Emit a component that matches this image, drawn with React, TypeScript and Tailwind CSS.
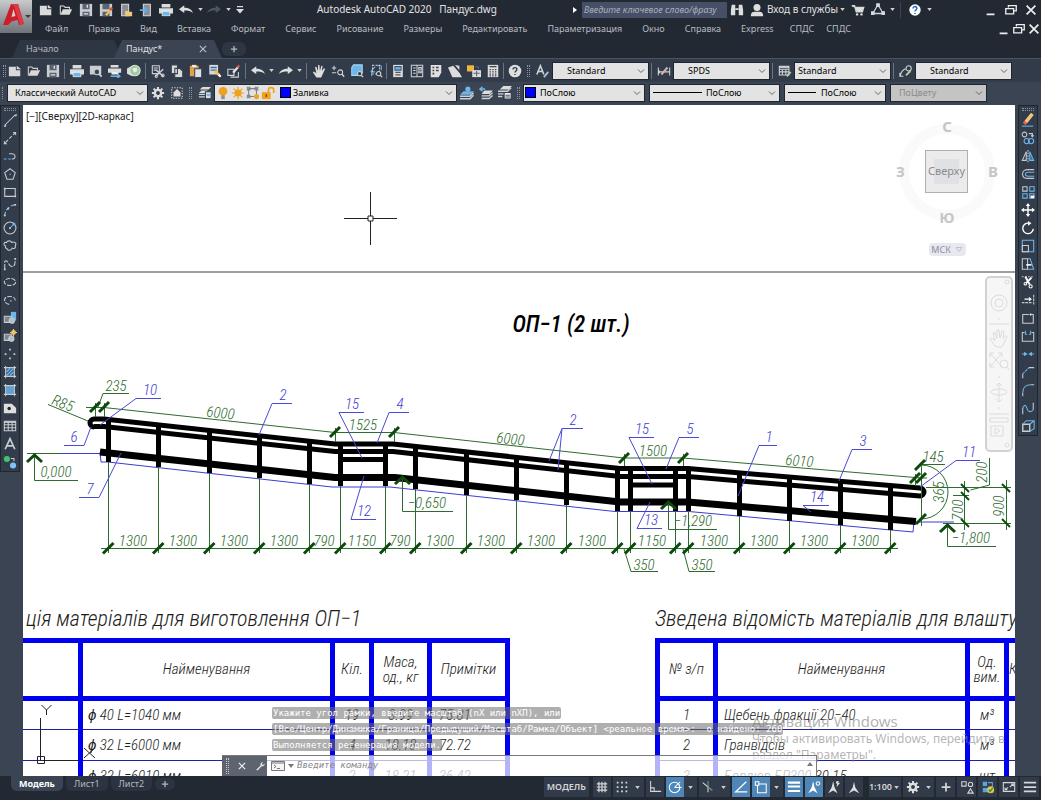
import { useState, type ReactNode } from "react";
import clsx from "clsx";

/* ---------- icons (16x16 grid) ---------- */

const ICONS: Record<string, ReactNode> = {
  new: <path d="M1 3h8v4h5v7H1z M10 2l5 4h-5z" fill="#d9d9d9" stroke="none" />,
  open: (
    <>
      <path d="M1.5 13V3.5h4l1.5 1.5h5V7" />
      <path d="M1.5 13.5l3-6.5h10.5l-3 6.5z" fill="#d9d9d9" stroke="none" />
    </>
  ),
  save: (
    <>
      <path d="M1 1h14v14H1z" fill="#c9ccd0" stroke="none" />
      <path d="M4 1h8v6H4z M4 10h8v5H4z" fill="#5a6370" stroke="none" />
      <path d="M5.5 12.500h5 M9.5 2v3.500" stroke="#e4e4e4" strokeWidth="1.500" />
    </>
  ),
  saveAs: (
    <>
      <path d="M1 1h14v14H1z" fill="#c9ccd0" stroke="none" />
      <path d="M4 1h8v6H4z M4 10h8v5H4z" fill="#5a6370" stroke="none" />
      <path d="M8 14l6-7" stroke="#f2c14e" strokeWidth="2.600" />
      <path d="M12.600 8.400L15 5.500" stroke="#d9523f" strokeWidth="2.600" />
    </>
  ),
  fromWeb: (
    <>
      <path d="M3 1.5h8v13H3z" fill="#8a8f96" stroke="#d9d9d9" />
      <path d="M7 15V9h3l1 1h4v5z" fill="#f0c777" stroke="none" />
    </>
  ),
  toWeb: (
    <>
      <path d="M5 1.5h8v13H5z" fill="#8a8f96" stroke="#d9d9d9" />
      <path d="M1 8h7 M5.5 5l3 3-3 3" stroke="#5fb0ea" strokeWidth="2" />
    </>
  ),
  print: (
    <>
      <path d="M0 6h16v6H0z M3 1h10v4H3z" fill="#dcdcdc" stroke="none" />
      <path d="M3.500 9.5h9v5h-9z" fill="#6cb6ea" stroke="#fff" strokeWidth="0.8" />
    </>
  ),
  preview: (
    <>
      <path d="M1 2h13v10H1z" fill="#c9ccd0" stroke="none" />
      <circle cx="9" cy="9" r="3.2" fill="#3b4453" />
      <path d="M11.5 11.5l3 3" strokeWidth="2" />
    </>
  ),
  publish: (
    <>
      <path d="M0 5h15v5H0z M3 1h9v3H3z" fill="#dcdcdc" stroke="none" />
      <path d="M4 9h8v3H4z" fill="#eee" stroke="none" />
      <path d="M3 14h10 M10.5 11.5L13.5 14l-3 2" stroke="#6cb6ea" strokeWidth="1.600" />
    </>
  ),
  globe: (
    <>
      <path d="M0 5l6-3v12l-6-3z" fill="#d9d9d9" stroke="none" />
      <circle cx="9" cy="7.5" r="6" fill="#9fc7a0" stroke="#dfe9df" />
      <path d="M6 5l5-1 1 4-4 2z" fill="#dff0df" stroke="none" />
    </>
  ),
  cut: (
    <>
      <path d="M1.5 2h8v9h-8z M3 4.500h5 M3 7h4" />
      <path d="M5 14l9-8 M6 7l8 7" strokeWidth="1.6" />
      <circle cx="13.5" cy="13" r="1.5" />
      <circle cx="6" cy="14" r="1.3" />
    </>
  ),
  copy: (
    <path d="M1.500 1h7v10h-7z M5.500 5h5.500l3.500 3v7.500h-9z" fill="#d9d9d9" stroke="#3b4453" />
  ),
  paste: (
    <>
      <path d="M1 2h10v12H1z" fill="#e0a24a" stroke="none" />
      <path d="M3.500 1h5v2.500h-5z" fill="#eee" stroke="none" />
      <path d="M6.500 5.500h8V15.500h-8z" fill="#dfe2e6" stroke="#3b4453" />
    </>
  ),
  match: (
    <>
      <path d="M1.500 1h10v11h-10z" fill="#d9d9d9" stroke="none" />
      <path d="M3 4h7 M3 7h7" stroke="#3c6fa8" strokeWidth="1.500" />
      <path d="M8 8l5 5" stroke="#f2c14e" strokeWidth="3" />
      <path d="M12 12l2.500 2.500" stroke="#fff" strokeWidth="2.500" />
    </>
  ),
  blockEdit: (
    <>
      <path d="M1 6h7v7H1z M4 15h9V9" />
      <path d="M7 10l6-7" stroke="#e3e3e3" strokeWidth="2.600" />
      <path d="M12 4l2-2.500" stroke="#d9523f" strokeWidth="2.600" />
    </>
  ),
  undo: (
    <path d="M0 7L6 2.500v2.800c5 0 8.500 1.500 10 6.200-2.500-2.500-5.500-3-10-3v3z" fill="#dedede" stroke="none" />
  ),
  redo: (
    <path d="M16 7L10 2.500v2.800c-5 0-8.500 1.500-10 6.200 2.500-2.500 5.500-3 10-3v3z" fill="#dedede" stroke="none" />
  ),
  redoOff: (
    <path d="M16 7L10 2.500v2.800c-5 0-8.500 1.500-10 6.200 2.500-2.500 5.500-3 10-3v3z" fill="#4c5460" stroke="none" />
  ),
  hand: (
    <path d="M5 15.500L1 9.500l1.200-1L5 10.500 3.500 3.500l1.500-.4 1.800 5L7 1h1.500l.5 7 1.700-6 1.400.4-.9 6 2.400-3.500 1.400.7-3 6.400-1.500 3.500z" fill="#dedede" stroke="none" />
  ),
  zoomRt: (
    <>
      <path d="M1 4.500h5 M3.500 2v5 M1 10h5" />
      <circle cx="10.500" cy="9.500" r="2.800" />
      <path d="M12.500 11.500l2.500 3" strokeWidth="1.600" />
    </>
  ),
  zoomWin: (
    <>
      <path d="M2 4l2-3h10v9l-2 3H2z" fill="#6cb6ea" stroke="#a8d5f5" />
      <circle cx="11" cy="11" r="2.500" fill="#323b49" />
      <path d="M13 13l2 2" strokeWidth="1.600" />
    </>
  ),
  zoomPrev: (
    <>
      <path d="M2 9l5-6 M7 9H3v5 M14 2v5 M9 2h5" stroke="#6cb6ea" />
      <path d="M4 1.500h8v10H4z" strokeDasharray="2 1.500" />
      <circle cx="11" cy="11" r="2.500" fill="#323b49" />
      <path d="M13 13l2 2" strokeWidth="1.600" />
    </>
  ),
  props: (
    <>
      <path d="M2.500 1h11v14h-11z" fill="#dcdcdc" stroke="none" />
      <path d="M4.500 3h7v4h-7z" fill="#6cb6ea" stroke="#3c5a78" />
      <path d="M5 9.500h6 M5 12.500h6" stroke="#555" strokeWidth="1.500" />
    </>
  ),
  center: (
    <>
      <path d="M1.500 1.500h13v13h-13z M8 1.500v13" />
      <path d="M3.500 4.500h3 M3.500 7.500h3 M10 4h3v2h-3z M10 8h3v2h-3z M3.500 10.500h3" />
    </>
  ),
  palettes: (
    <>
      <path d="M2 1h12v9l-3 5H2z" fill="#e0e0e0" stroke="none" />
      <path d="M4 4h2 M8 4h3 M4 7.500h2 M8 7.500h3 M4 11h2" stroke="#444" strokeWidth="1.800" />
    </>
  ),
  sheetSet: (
    <path d="M0 4l6-2 7 8 3 5H5z M8 1l5 1v5z" fill="#dcdcdc" stroke="none" />
  ),
  markup: (
    <>
      <path d="M0 1.500h8v7H0z" fill="#f0b73c" stroke="none" />
      <path d="M6 7h10v8H6z" fill="#dcdcdc" stroke="none" />
      <path d="M7.500 10.500h7 M11 8v6 M9 3.500h4V6" stroke="#50657c" />
    </>
  ),
  calc: (
    <>
      <path d="M2 1h12v14H2z" fill="#dcdcdc" stroke="none" />
      <path d="M4 3h8" stroke="#444" strokeWidth="1.500" />
      <path d="M4 6.500h8 M4 9h8 M4 11.500h8 M4 13.500h8" stroke="#444" strokeDasharray="1.600 1.500" strokeWidth="1.400" />
    </>
  ),
  help: (
    <>
      <circle cx="8" cy="8" r="7.200" fill="#dedede" stroke="none" />
      <path d="M5.800 6.300c0-3 4.500-2.800 4.300 0C10 8 8 8 8 9.800 M8 11.300v1.400" stroke="#323b49" strokeWidth="1.600" />
    </>
  ),
  helpBlue: (
    <>
      <circle cx="8" cy="8" r="6.500" fill="#fff" stroke="none" />
      <path d="M5.800 6.300c0-3 4.500-2.800 4.300 0C10 8 8 8 8 9.800 M8 11.300v1.400" stroke="#1e66c8" strokeWidth="1.700" />
    </>
  ),
  textStyle: (
    <>
      <path d="M1 12L5 2l4 10 M2.500 8.500h5" strokeWidth="1.800" />
      <path d="M9 15l5-6" stroke="#a9bdd0" strokeWidth="2.200" />
    </>
  ),
  dimStyle: (
    <>
      <path d="M1.500 4v9 M14.500 4v9 M1.500 9h13 M3 7.500L1.500 9 3 10.500" />
      <path d="M5 12l7-8" strokeWidth="2.200" stroke="#d7b3a4" />
    </>
  ),
  tableStyle: (
    <>
      <path d="M1.500 2.500h11v10h-11z M1.500 6h11 M1.500 9h11 M5 6v6.500 M9 6v6.500" />
      <path d="M1.500 3.500h11" strokeWidth="2" />
      <path d="M10 14l4.500-5" stroke="#b8c9a8" strokeWidth="2.200" />
    </>
  ),
  leaderStyle: (
    <>
      <path d="M1.500 13.500c1-5 3-7 6-8 M1 10v4h4" />
      <circle cx="11" cy="5" r="3" />
      <path d="M8 13l5-5" stroke="#bcc6a0" strokeWidth="2.200" />
    </>
  ),
  gear: (
    <>
      <circle cx="8" cy="8" r="5" fill="#dedede" stroke="none" />
      <path d="M8 1v14 M1 8h14 M3 3l10 10 M13 3L3 13" strokeWidth="2.400" stroke="#dedede" />
      <circle cx="8" cy="8" r="2.200" fill="#323b49" stroke="none" />
    </>
  ),
  frame: (
    <>
      <path d="M2 2h12v12H2z" strokeDasharray="1.500 1.500" />
      <path d="M4 7.500L8 3.500l4 4V12H4z" fill="#dedede" stroke="none" />
    </>
  ),
  layers: (
    <>
      <path d="M5 1h10l-3 3H2z M4 5h7l-2 3H1z" fill="#dcdcdc" stroke="none" />
      <path d="M1 9.500h7 M1 12.500h7" strokeWidth="1.500" />
      <path d="M8.500 6.500h6.500v8h-6.500z" fill="#dcdcdc" stroke="#323b49" />
      <path d="M10 9h3.500v2.500H10z" fill="#6cb6ea" stroke="none" />
    </>
  ),
  bulb: (
    <>
      <circle cx="8" cy="6" r="5" fill="#f0a21c" stroke="none" />
      <path d="M6 10.500h4V15H6z" fill="#8c8f94" stroke="none" />
    </>
  ),
  sun: (
    <>
      <circle cx="8" cy="8" r="4" fill="#f0a21c" stroke="none" />
      <path d="M8 1v14 M1 8h14 M3 3l10 10 M13 3L3 13" stroke="#f0a21c" strokeWidth="1.400" />
    </>
  ),
  vpFreeze: (
    <>
      <path d="M3 3h9v9H3z M1.500 1.500h3v3h-3z M10.500 1.500h3v3h-3z M1.500 10.500h3v3h-3z" stroke="#7c8188" />
      <circle cx="12" cy="12" r="3" fill="#f0a21c" stroke="none" />
    </>
  ),
  unlock: (
    <>
      <path d="M1 7h10v8H1z" fill="#f0a21c" stroke="none" />
      <path d="M8.500 7V4.500C8.500 1 14.500 1 14.500 4.500V8" stroke="#f0a21c" strokeWidth="2" />
      <path d="M6 9.500v3" stroke="#7a4b00" strokeWidth="1.500" />
    </>
  ),
  layCur: (
    <>
      <circle cx="9" cy="3.500" r="3" fill="#6cb6ea" stroke="none" />
      <path d="M4 6h12l-4 4H0z" fill="#6cb6ea" stroke="none" />
      <path d="M0 11.700h11.500l4-4 M0 14.500h11.500l4-4" strokeWidth="1.600" />
    </>
  ),
  layPrev: (
    <>
      <path d="M1 3.500h6 M4 1L1 3.500 4 6" stroke="#6cb6ea" strokeWidth="1.600" />
      <path d="M6 5h10l-4 4H3z" fill="#dcdcdc" stroke="none" />
      <path d="M3 11.300h8.500l4-3.500 M3 14.300h8.500l4-3.500" strokeWidth="1.600" />
    </>
  ),
  layState: (
    <>
      <path d="M6 0h10l-4 4H2z" fill="#dcdcdc" stroke="none" />
      <path d="M0 6h11l4-4 M0 9h7" strokeWidth="1.600" />
      <path d="M7 7.500h8V15H7z" fill="#eee" stroke="#323b49" />
      <path d="M8.500 10.500h5 M8.500 12.500h5" stroke="#555" />
      <path d="M0 12h5" strokeWidth="1.600" />
    </>
  ),

  line: <path d="M2 14L14 2 M1 15h2v-2 M13 3h2V1" />,
  xline: (
    <>
      <path d="M3 13L13 3" strokeDasharray="4 2" />
      <path d="M1 15v-4l4 4z M15 1v4l-4-4z" fill="currentColor" stroke="none" />
    </>
  ),
  pline: (
    <>
      <path d="M1 11.500h9" strokeDasharray="3 2" stroke="#6cb6ea" />
      <path d="M10 11.500c5 0 5-6 0-6H7" />
    </>
  ),
  polygon: (
    <>
      <path d="M8 2l6 4.500L11.500 14h-7L2 6.500z" />
      <path d="M7.500 8.500h1.500" stroke="#6cb6ea" strokeWidth="1.500" />
    </>
  ),
  rect: (
    <>
      <path d="M2 4h12v9H2z" />
      <path d="M1 3h2v2H1z M13 12h2v2h-2z" fill="currentColor" stroke="none" />
    </>
  ),
  arc: (
    <>
      <path d="M2 15C2 8 7 3 14 2" strokeDasharray="5 2" stroke="#8fc4ec" />
      <path d="M1 13h2v2H1z M13 1h2v2h-2z M5 5.500h2v2H5z" fill="currentColor" stroke="none" />
    </>
  ),
  circle: (
    <>
      <circle cx="8" cy="8" r="6.800" />
      <path d="M8 8l4-4" stroke="#6cb6ea" />
      <path d="M7 7h2v2H7z" fill="currentColor" stroke="none" />
      <path d="M11 2h3v3h-3z" fill="#6cb6ea" stroke="none" />
    </>
  ),
  cloud: (
    <path d="M3 8C0 7 1 3 4 4c1-2.500 5-2.500 6 0 3-1.500 6 1 4 3.500 1 3-2 4-3.500 3-1 3-5 3-5.500 1-2-.5-2.500-2-2-3.500z" />
  ),
  spline: (
    <>
      <path d="M2 14V5c4-3 4 6 8 6 4 0 4-5 4-9" strokeDasharray="6 1.500" />
      <path d="M1 13h2v2H1z M13 1h2v2h-2z" fill="currentColor" stroke="none" />
    </>
  ),
  ellipse: <ellipse cx="8" cy="8" rx="6.500" ry="4" strokeDasharray="5 1.500" />,
  ellArc: (
    <>
      <path d="M7 13C0 12 0 4 7 4s7 3 7 5" strokeDasharray="5 1.500" />
      <path d="M8 9h2" stroke="#6cb6ea" />
    </>
  ),
  insert: (
    <>
      <path d="M9 1h6v10H9z" fill="#6cb6ea" stroke="none" />
      <path d="M1.500 6h8v7h-8z" fill="#7b8491" />
      <circle cx="10" cy="11" r="3" fill="#b7bdc6" />
    </>
  ),
  makeBlock: (
    <>
      <path d="M1.500 6h8v7h-8z" fill="#7b8491" />
      <circle cx="9.500" cy="11" r="3" fill="#b7bdc6" />
      <circle cx="12" cy="4" r="2.800" fill="#f5c56a" stroke="none" />
      <path d="M12 0v8 M8 4h8" stroke="#f5c56a" />
    </>
  ),
  points: (
    <path d="M7 2h2v2H7z M2 7h2v2H2z M12 7h2v2h-2z M7 12h2v2H7z" fill="currentColor" stroke="none" />
  ),
  hatch: (
    <>
      <path d="M3.500 3.500h9v9h-9z" fill="#3c6f9c" stroke="none" />
      <path d="M4 8l4-4 M4 12l8-8 M8 12l4-4" stroke="#8fc4ec" />
      <path d="M3 1v14 M13 1v14 M1 3h14 M1 13h14" />
    </>
  ),
  gradient: (
    <>
      <path d="M3.500 3.500h9v9h-9z" fill="#5ea3d8" stroke="none" />
      <path d="M3 1v14 M13 1v14 M1 3h14 M1 13h14" />
    </>
  ),
  region: (
    <>
      <path d="M1 3h9l5 5v6H1z" fill="#dedede" stroke="none" />
      <circle cx="7" cy="8.500" r="2" fill="#20262f" stroke="none" />
    </>
  ),
  table: (
    <>
      <path d="M1.500 2.500h13v11h-13z M1.500 6.500h13 M1.500 10h13 M6 4v9.500 M10.500 4v9.500" />
      <path d="M1.500 3.500h13" strokeWidth="2" />
    </>
  ),
  mtext: <path d="M2.500 14L8 2l5.500 12 M4.500 10h7" strokeWidth="2" />,
  addSel: (
    <>
      <circle cx="4.500" cy="4.500" r="3.500" fill="#3fc46c" stroke="none" />
      <circle cx="11.500" cy="12" r="3.500" fill="#7cc4f4" stroke="none" />
      <path d="M9 4h3.500v3" />
    </>
  ),

  erase: (
    <>
      <path d="M5 11l8-10" stroke="#f2c777" strokeWidth="4" />
      <path d="M3.500 12.500L5.500 10" stroke="#e2655a" strokeWidth="4" />
      <path d="M1 15h13" stroke="#6cb6ea" />
    </>
  ),
  copyObj: (
    <>
      <circle cx="4" cy="4" r="2.700" />
      <path d="M9 3h4v3 M11.500 5L13 6.500 14.500 5" />
      <circle cx="6.500" cy="11.500" r="3" stroke="#6cb6ea" />
      <circle cx="11.500" cy="11.500" r="3" stroke="#6cb6ea" />
    </>
  ),
  mirror: (
    <>
      <path d="M6 3v10H1.500z" />
      <path d="M10 3v10h4.500z" stroke="#6cb6ea" fill="#2f6d9c" />
      <path d="M8 1v14" strokeDasharray="2 1" />
    </>
  ),
  offset: (
    <>
      <path d="M15 3H7C0 3 0 13 7 13h8" />
      <path d="M15 6H8C4 6 4 10.500 8 10.500h7" stroke="#6cb6ea" />
    </>
  ),
  array: (
    <>
      <path d="M2 2h5v5H2z" />
      <path d="M10 2h5v5h-5z M2 10h5v5H2z M10 10h5v5h-5z" stroke="#6cb6ea" />
      <path d="M11 12h4v3h-4z" fill="#fff" stroke="none" />
    </>
  ),
  move: (
    <>
      <path d="M8 3v10 M3 8h10" strokeWidth="1.600" stroke="#fff" />
      <path d="M8 0l2.500 3.500h-5z M8 16l2.500-3.500h-5z M0 8l3.500-2.500v5z M16 8l-3.500-2.500v5z" fill="#fff" stroke="none" />
    </>
  ),
  rotate: (
    <>
      <path d="M14 9a6 6 0 1 1-5-6.500" stroke="#fff" strokeWidth="1.600" />
      <path d="M8 0l4 2.700L8 5.500z" fill="#fff" stroke="none" />
    </>
  ),
  scale: (
    <>
      <path d="M1.500 1.500h13v13h-13z" stroke="#6cb6ea" />
      <path d="M1.500 7.500h7v7h-7z" />
    </>
  ),
  stretch: (
    <>
      <path d="M1.500 2h6v12h-6z" />
      <path d="M7.500 2h3l4 12h-7" stroke="#6cb6ea" />
      <path d="M6 9h6" stroke="#fff" strokeWidth="1.800" />
    </>
  ),
  trim: (
    <>
      <path d="M1 2h14" strokeDasharray="2 1.500" />
      <path d="M5 2l5 9 M12 3L6 9" stroke="#fff" strokeWidth="2.200" />
      <circle cx="11" cy="13" r="1.800" stroke="#fff" />
      <circle cx="5" cy="10" r="1.500" stroke="#fff" />
    </>
  ),
  extend: (
    <>
      <path d="M1 11h12 M14.500 2v12" strokeDasharray="3 1" />
      <path d="M4 7h7 M9 5l2.500 2L9 9" stroke="#fff" />
    </>
  ),
  breakPt: (
    <>
      <path d="M9 4h-7v10h12V4h-2" />
      <path d="M10 3h2v2h-2z" fill="#fff" stroke="none" />
    </>
  ),
  break2: (
    <>
      <path d="M4 4H1.500v10h13V4H12" />
      <path d="M5 2v4h2 M11 2v4H9" stroke="#6cb6ea" />
    </>
  ),
  join: (
    <path d="M1 8h5 M4 6.500L6.500 8 4 9.500z M15 8h-5 M12 6.500L9.500 8l2.500 1.500z" stroke="#6cb6ea" fill="#6cb6ea" />
  ),
  chamfer: (
    <>
      <path d="M2 15V10 M9 3h6" />
      <path d="M2 10l7-7" stroke="#6cb6ea" strokeDasharray="3 1" />
    </>
  ),
  fillet: (
    <>
      <path d="M2 15v-4 M11 2h4" />
      <path d="M2 11c0-6 4-9 9-9" stroke="#6cb6ea" />
    </>
  ),
  blend: (
    <>
      <path d="M2 15V8 M14 2v8" />
      <path d="M2 8C4 3 6 5 7 9s5 4 7 1" stroke="#6cb6ea" />
    </>
  ),
  explode: (
    <>
      <path d="M2 6h8v8H2z" strokeWidth="1.600" />
      <path d="M2 6l4-4h9v9l-5 3 M10 6l5-4" stroke="#6cb6ea" />
    </>
  ),

  binoc: (
    <>
      <path d="M2 2h4v12H1V8z M10 2h4l1 6v6h-5z" fill="#dedede" stroke="none" />
      <path d="M6 7h4" strokeWidth="2" />
    </>
  ),
  user: (
    <>
      <circle cx="8" cy="5" r="4" fill="#dedede" stroke="none" />
      <path d="M1 15c0-6 4-5 7-5s7-1 7 5z" fill="#dedede" stroke="none" />
    </>
  ),
  cart: (
    <>
      <path d="M1 3h3l2 7h7l1.500-5H5z" fill="none" strokeWidth="1.600" />
      <path d="M5 5h9l-1 4H6z" fill="#dedede" stroke="none" />
      <circle cx="7" cy="13" r="1.400" fill="#dedede" stroke="none" />
      <circle cx="12" cy="13" r="1.400" fill="#dedede" stroke="none" />
    </>
  ),
  a360: (
    <>
      <path d="M8 2l6 10H2z" strokeWidth="1.500" stroke="#b9d4ea" />
      <path d="M2 12h12 M6.500 1h3v3h-3z M0.500 10h3v3h-3z M12.500 10h3v3h-3z" fill="#dedede" />
    </>
  ),
  min: <path d="M3 13h9" strokeWidth="2" stroke="#eee" />,
  restore: (
    <path d="M5 5V3h9v6h-3 M2 6.500h9v6H2z" stroke="#eee" strokeWidth="1.500" />
  ),
  close: <path d="M3 3l10 10 M13 3L3 13" stroke="#eee" strokeWidth="2" />,
  plus: <path d="M8 3v10 M3 8h10" strokeWidth="2" />,
  wrench: (
    <path d="M2 14l7-7c-1-3 1-5.500 4-5L11 4.500l.5 1.500 1.500.5L15 4c1 3-2 5-4.500 4.500L4 15z" fill="#eee" stroke="none" />
  ),

  grid: <path d="M4.500 2v12 M8 2v12 M11.500 2v12 M2 4.500h12 M2 8h12 M2 11.500h12" strokeWidth="1.400" />,
  snap: <path d="M2 3h13 M2 8h13 M2 13h13" strokeDasharray="2 3" strokeWidth="2" />,
  ortho: <path d="M3 1v12h12 M3 9h4v4" />,
  polar: (
    <>
      <circle cx="7.500" cy="8.500" r="6" stroke="#fff" />
      <path d="M7.500 8.500h8 M7.500 8.500L14 2" stroke="#fff" />
    </>
  ),
  iso: (
    <>
      <path d="M2 3l6 5v6" />
      <path d="M8 1v7l5 4" stroke="#6fa77c" />
    </>
  ),
  otrack: <path d="M14 2L2 13.500h13" stroke="#fff" strokeWidth="1.500" />,
  osnap: (
    <>
      <path d="M4 4.500h10v10H4z" stroke="#fff" />
      <path d="M1.500 2h4v4h-4z" fill="#4f86b8" stroke="#fff" />
    </>
  ),
  lwt: <path d="M1 3h14 M1 7.500h14 M1 12.500h14" stroke="#fff" strokeWidth="2.400" />,
  annoVis: (
    <>
      <path d="M7 1l-1.500 7L1.500 15l5.500-3 5 3-3.500-7z" fill="#fff" stroke="none" />
      <circle cx="12.500" cy="4" r="2" stroke="#fff" />
    </>
  ),
  annoAuto: (
    <path d="M7 1l-1.500 7L1.500 15l5.500-3 5 3-3.500-7z M11 1h2.500l-1 2H15l-4 5 .5-4H10z" fill="#dedede" stroke="none" />
  ),
  anno: <path d="M8 2L6.500 8.500 2 15 8 12l6 3-4.500-6.500z" fill="#dedede" stroke="none" />,
  isolate: (
    <>
      <path d="M2 2h5v5H2z M9 15l3-5 3 5z" />
      <circle cx="12" cy="5" r="2.500" />
    </>
  ),
  perf: (
    <>
      <path d="M2 2h5v5H2z" fill="#5aa4dc" stroke="none" />
      <path d="M8 3h5v5" stroke="#5aa4dc" />
      <path d="M2 9h6v5H2z" fill="#5aa4dc" stroke="none" />
      <circle cx="11" cy="11" r="4" fill="#e5c54a" stroke="none" />
      <path d="M9 11l1.500 2 3-4" stroke="#2f8f4a" strokeWidth="1.600" />
    </>
  ),
  clean: (
    <>
      <path d="M1.500 3h13v10h-13z" />
      <path d="M9 8l4-3.500 M10.500 4.500H13V7 M7 8.500L4 11 M3.500 8.500V11H6" />
    </>
  ),
  menu: <path d="M1 3h14 M1 8h14 M1 13h14" strokeWidth="2" />,
};

function Icon({ name, size = "md" }: { name: string; size?: "sm" | "md" }) {
  return (
    <svg
      viewBox="0 0 16 16"
      fill="none"
      stroke="currentColor"
      strokeWidth="1.2"
      className={clsx("shrink-0", size === "sm" ? "size-[10px]" : "size-[14px]")}
    >
      {ICONS[name]}
    </svg>
  );
}

function IconButton({
  name,
  label,
  className = "h-[18px] w-[19px]",
}: {
  name: string;
  label?: string;
  className?: string;
}) {
  return (
    <button
      type="button"
      aria-label={label ?? name}
      className={clsx("flex shrink-0 items-center justify-center", className)}
    >
      <Icon name={name} />
    </button>
  );
}

function Caret({ className = "w-[13px]" }: { className?: string }) {
  return (
    <span className={clsx("flex shrink-0 justify-center", className)}>
      <svg viewBox="0 0 6 4" className="h-[3px] w-[5px] fill-[#d0d0d0]">
        <path d="M0 0h6L3 4z" />
      </svg>
    </span>
  );
}

function Grip() {
  return (
    <span className="mx-[3px] h-3 w-[3px] shrink-0 border-x border-dotted border-[#8b94a1]" />
  );
}

function Sep({ tight }: { tight?: boolean }) {
  return (
    <span className={clsx("h-4 w-px shrink-0 bg-[#6a7380]", tight ? "mx-px" : "mx-[2px]")} />
  );
}

function Combo({
  label,
  value,
  width,
  pad = "pl-2",
  disabled,
  children,
}: {
  label: string;
  value: string;
  width: string;
  pad?: string;
  disabled?: boolean;
  children?: ReactNode;
}) {
  return (
    <div className={clsx("relative h-[18px] shrink-0", width)}>
      <select
        aria-label={label}
        disabled={disabled}
        className={clsx(
          "block h-full w-full appearance-none border border-[#20262f] text-[9px] leading-4 opacity-100 outline-none",
          pad,
          disabled ? "bg-[#c4c4c4] text-[#8a8a8a]" : "bg-[#e3e3e3] text-black",
        )}
      >
        <option>{value}</option>
      </select>
      {children}
      <svg
        viewBox="0 0 8 5"
        className="pointer-events-none absolute right-1 top-[7px] h-[5px] w-2 fill-none stroke-[#666]"
      >
        <path d="M1 .5l3 3 3-3" />
      </svg>
    </div>
  );
}

/* ---------- window chrome ---------- */

const MENU = [
  "Файл", "Правка", "Вид", "Вставка", "Формат", "Сервис", "Рисование",
  "Размеры", "Редактировать", "Параметризация", "Окно", "Справка", "Express",
];

function TitleBar() {
  const [query, setQuery] = useState("");
  return (
    <header className="flex h-[38px] shrink-0 bg-[#222933] text-[#d6d6d6]">
      <button
        type="button"
        aria-label="AutoCAD"
        className="flex h-[33px] w-8 shrink-0 items-center bg-linear-to-b from-[#c9cacc] to-[#6f7277]"
      >
        <svg viewBox="0 0 32 32" className="h-8 w-8">
          <path d="M3 24L11 3h7l6 20-5 1-1.500-5-6 1.500L8 24z" fill="#c8202b" />
          <path d="M11.500 16l4-1-2-7z" fill="#e8c9c9" />
          <path d="M11 3h7l6 20-4 .6L14 5z" fill="#dc3a42" />
          <path d="M25 14h6l-3 3z" fill="#3a3a3a" />
        </svg>
      </button>

      <div className="flex min-w-0 flex-1 flex-col">
        <div className="flex h-[19px] items-center">
          <div className="ml-1 flex items-center">
            {["new", "open", "save", "saveAs", "fromWeb", "toWeb", "print", "undo"].map((n) => (
              <IconButton key={n} name={n} className="h-[18px] w-5" />
            ))}
            <Caret className="w-2" />
            <IconButton name="redoOff" className="h-[18px] w-5" />
            <Caret className="w-2" />
            <svg viewBox="0 0 8 8" className="ml-1 size-2 fill-[#dedede]">
              <path d="M1 0h6v1.200H1z M0 3h8L4 7.500z" />
            </svg>
          </div>
          <h1 className="ml-auto whitespace-pre text-[10px] text-[#e2e2e2]">
            Autodesk AutoCAD 2020   Пандус.dwg
          </h1>
          <span className="ml-[76px] flex items-center">
            <svg viewBox="0 0 4 6" className="mr-[5px] h-[6px] w-1 fill-white">
              <path d="M0 0l4 3-4 3z" />
            </svg>
            <input
              value={query}
              onChange={(e) => setQuery(e.target.value)}
              aria-label="Поиск"
              placeholder="Введите ключевое слово/фразу"
              className="h-4 w-[145px] bg-[#464f66] px-[2px] text-[9px] italic text-white outline-none placeholder:text-[#a9b0bf]"
            />
          </span>
          <IconButton name="binoc" className="h-[18px] w-5" />
          <IconButton name="user" className="h-[18px] w-5" />
          <button type="button" className="flex items-center text-[10px] text-[#e2e2e2]">
            Вход в службы
            <Caret className="w-2" />
          </button>
          <IconButton name="cart" className="ml-[2px] h-[18px] w-5" />
          <IconButton name="a360" className="h-[18px] w-5" />
          <Caret className="w-2" />
          <span className="mx-1 h-4 w-px bg-[#3b4453]" />
          <IconButton name="helpBlue" className="h-[18px] w-5" />
          <Caret className="w-2" />
          <div className="ml-12 flex">
            <IconButton name="min" className="h-[18px] w-5" />
            <IconButton name="restore" className="h-[18px] w-5" />
            <IconButton name="close" className="h-[18px] w-5" />
          </div>
        </div>

        <nav className="flex h-[19px] items-center gap-5 pl-[13px] text-[9px] text-[#b9bcc1]">
          {MENU.map((m) => (
            <button key={m} type="button" className="shrink-0">
              {m}
            </button>
          ))}
          <span className="-ml-1 flex gap-3">
            <button type="button">СПДС</button>
            <button type="button">СПДС</button>
          </span>
          <div className="ml-auto flex">
            <IconButton name="min" className="h-[18px] w-[15px]" />
            <IconButton name="restore" className="h-[18px] w-[15px]" />
            <IconButton name="close" className="h-[18px] w-[15px]" />
          </div>
        </nav>
      </div>
    </header>
  );
}

function FileTabs() {
  return (
    <div className="flex h-5 shrink-0 items-end bg-[#222933] pl-3 text-[9px]">
      <button
        type="button"
        className="h-[18px] w-[110px] bg-[#2e3643] pl-[14px] text-left text-[#b4b8be] [clip-path:polygon(8px_0,102px_0,100%_100%,0_100%)]"
      >
        Начало
      </button>
      <div className="-ml-2 flex h-[18px] w-[108px] items-center bg-[#3b4453] pl-3 pr-[14px] text-[#e0e0e0] [clip-path:polygon(8px_0,100px_0,100%_100%,0_100%)]">
        <button type="button">Пандус*</button>
        <button type="button" aria-label="Закрыть" className="ml-auto opacity-70">
          <Icon name="close" size="sm" />
        </button>
      </div>
      <button
        type="button"
        aria-label="Новая вкладка"
        className="mb-[2px] flex h-[14px] w-6 items-center justify-center rounded-md bg-[#2e3643] text-[#b4b8be]"
      >
        <Icon name="plus" size="sm" />
      </button>
    </div>
  );
}

const STD_GROUPS = [
  ["new", "open", "save"],
  ["print", "preview", "publish", "globe"],
  ["cut", "copy", "paste", "match", "blockEdit"],
];

function Toolbars() {
  return (
    <div className="shrink-0 bg-[#3b4453] text-[#d0d3d7]">
      <div className="flex h-6 items-center border-t border-[#4a5361] bg-[#323b49]">
        <Grip />
        <span className="-ml-1" />
        {STD_GROUPS.map((g) => (
          <span key={g[0]} className="flex items-center">
            {g.map((n) => (
              <IconButton key={n} name={n} />
            ))}
            <Sep />
          </span>
        ))}
        <IconButton name="undo" />
        <Caret className="w-[9px]" />
        <IconButton name="redo" />
        <Caret className="w-[9px]" />
        <Sep />
        {["hand", "zoomRt", "zoomWin", "zoomPrev"].map((n) => (
          <IconButton key={n} name={n} />
        ))}
        <Sep tight />
        {["props", "center", "palettes", "sheetSet", "markup", "calc"].map((n) => (
          <IconButton key={n} name={n} />
        ))}
        <Sep tight />
        <IconButton name="help" />
        <Grip />
        <IconButton name="textStyle" />
        <Combo label="Текстовый стиль" value="Standard" width="w-[97px]" pad="pl-[14px]" />
        <Sep />
        <IconButton name="dimStyle" />
        <Combo label="Размерный стиль" value="SPDS" width="w-[97px]" pad="pl-[14px]" />
        <Sep />
        <IconButton name="tableStyle" />
        <Combo label="Стиль таблиц" value="Standard" width="w-[97px]" pad="pl-[3px]" />
        <Sep />
        <IconButton name="leaderStyle" />
        <Combo label="Стиль мультивыноски" value="Standard" width="w-[97px]" pad="pl-[14px]" />
      </div>

      <div className="flex h-[23px] items-center pb-[2px]">
        <span className="ml-[2px] mr-[3px] h-3 w-[2px] border-l border-dotted border-[#8b94a1]" />
        <Combo label="Рабочее пространство" value="Классический AutoCAD" width="w-[141px]" pad="pl-[7px]" />
        <IconButton name="gear" />
        <IconButton name="frame" />
        <Grip />
        <IconButton name="layers" />
        <Combo label="Слой" value="Заливка" width="w-[243px]" pad="pl-[78px]">
          <span className="pointer-events-none absolute left-[2px] top-[2px] flex items-center gap-px">
            <Icon name="bulb" />
            <Icon name="sun" />
            <Icon name="vpFreeze" />
            <Icon name="unlock" />
            <span className="ml-1 size-[11px] border border-black bg-[#0000ff]" />
          </span>
        </Combo>
        <IconButton name="layCur" />
        <IconButton name="layPrev" />
        <IconButton name="layState" />
        <Grip />
        <Combo label="Цвет" value="ПоСлою" width="w-[122px]" pad="pl-4">
          <span className="pointer-events-none absolute left-[2px] top-[3px] size-[11px] border border-black bg-[#0000ff]" />
        </Combo>
        <span className="w-1" />
        <Combo label="Тип линий" value="ПоСлою" width="w-[131px]" pad="pl-[56px]">
          <span className="pointer-events-none absolute left-1 top-2 h-px w-[49px] bg-black" />
        </Combo>
        <span className="w-1" />
        <Combo label="Вес линий" value="ПоСлою" width="w-[102px]" pad="pl-[36px]">
          <span className="pointer-events-none absolute left-1 top-2 h-px w-7 bg-black" />
        </Combo>
        <span className="w-1" />
        <Combo label="Стиль печати" value="ПоЦвету" width="w-[97px]" pad="pl-2" disabled />
      </div>
    </div>
  );
}

const DRAW_TOOLS = [
  "line", "xline", "pline", "polygon", "rect", "arc", "circle", "cloud", "spline", "ellipse",
  "ellArc", "insert", "makeBlock", "points", "hatch", "gradient", "region", "table", "mtext", "addSel",
];

const MODIFY_TOOLS = [
  "erase", "copyObj", "mirror", "offset", "array", "move", "rotate", "scale", "stretch",
  "trim", "extend", "breakPt", "break2", "join", "chamfer", "fillet", "blend", "explode",
];

function SideToolbar({ tools, label }: { tools: string[]; label: string }) {
  return (
    <div
      role="toolbar"
      aria-label={label}
      className="flex w-5 shrink-0 flex-col items-center self-start border border-[#20262f] bg-[#333c4a] text-[#c8ccd2]"
    >
      <span className="mt-[2px] h-[3px] w-3 border-y border-dotted border-[#8b94a1]" />
      {tools.map((t) => (
        <IconButton key={t} name={t} className="h-[18px] w-[18px]" />
      ))}
    </div>
  );
}

/* ---------- drawing ---------- */

type Pt = [number, number];

const POSTS: [number, number, number][] = [
  [108, 418, 462], [158, 424, 467], [209, 430, 473], [259, 435, 478], [309, 441, 484],
  [340, 444, 486], [385, 444, 486], [415, 446, 489], [466, 451, 495], [516, 457, 500],
  [566, 462, 505], [617, 468, 511], [630, 468, 511], [675, 468, 511], [688, 468, 511],
  [739, 473, 516], [789, 478, 521], [840, 482, 525], [890, 486, 530],
];

const CHAIN: [number, string][] = [
  [133, "1300"], [183, "1300"], [234, "1300"], [284, "1300"], [324, "790"], [362, "1150"],
  [400, "790"], [440, "1300"], [491, "1300"], [541, "1300"], [592, "1300"], [652, "1150"],
  [714, "1300"], [764, "1300"], [814, "1300"], [865, "1300"],
];

// text, centre x, baseline y, shelf from/to, leader targets (the leader leaves the far end when `end` is set)
const CALLOUTS: { t: string; x: number; y: number; a: number; b: number; to: Pt[]; end?: boolean }[] = [
  { t: "10", x: 150, y: 395, a: 136, b: 161, to: [[100, 425]] },
  { t: "2", x: 283, y: 400, a: 272, b: 292, to: [[259, 435]] },
  { t: "6", x: 74, y: 442, a: 64, b: 84, to: [[91, 427]], end: true },
  { t: "7", x: 90, y: 494, a: 79, b: 99, to: [[121, 453]], end: true },
  { t: "15", x: 352, y: 409, a: 339, b: 364, to: [[362, 458]] },
  { t: "4", x: 400, y: 409, a: 389, b: 409, to: [[377, 443]] },
  { t: "2", x: 573, y: 425, a: 562, b: 583, to: [[549, 461], [558, 470]] },
  { t: "12", x: 364, y: 516, a: 351, b: 376, to: [[364, 476]] },
  { t: "15", x: 642, y: 434, a: 629, b: 654, to: [[652, 484]] },
  { t: "5", x: 690, y: 434, a: 679, b: 699, to: [[666, 469]] },
  { t: "1", x: 769, y: 442, a: 759, b: 777, to: [[738, 496]] },
  { t: "3", x: 863, y: 446, a: 852, b: 872, to: [[839, 481]] },
  { t: "14", x: 817, y: 502, a: 803, b: 829, to: [[811, 512]] },
  { t: "13", x: 651, y: 525, a: 637, b: 662, to: [[650, 502]] },
  { t: "11", x: 969, y: 457, a: 956, b: 980, to: [[920, 487]] },
];

const LEVELS: { t: string; x: number; y: number; base: number; end: number; tx: number }[] = [
  { t: "0,000", x: 34, y: 454, base: 480, end: 78, tx: 56 },
  { t: "−0,650", x: 402, y: 476, base: 511, end: 453, tx: 427 },
  { t: "−1,290", x: 668, y: 501, base: 529, end: 717, tx: 693 },
  { t: "−1,800", x: 947, y: 524, base: 546, end: 996, tx: 971 },
];

const RAMP_TICKS: Pt[] = [
  [95, 407], [104, 407], [335, 432], [394, 432], [624, 458], [683, 458],
  [915, 478], [921, 478], [920, 465], [921, 519],
];

const SIDE_TICKS: Pt[] = [
  [965, 488], [965, 496], [965, 523], [1006, 488], [1006, 523],
];

function DimText({ x, y, rot = 0, children }: { x: number; y: number; rot?: number; children: string }) {
  return (
    <text x={x} y={y} textAnchor="middle" transform={`rotate(${rot} ${x} ${y})`}>
      {children}
    </text>
  );
}

function RampDrawing() {
  return (
    <svg
      viewBox="23 105 992 671"
      className="absolute left-0 top-0 h-[671px] w-[992px] overflow-visible text-[15px] font-light italic [font-family:'Roboto_Condensed','Liberation_Sans_Narrow','Roboto',sans-serif]"
      fill="none"
    >
      <path d="M23 272h2400" stroke="#3c3c3c" strokeWidth="1" />

      {/* cursor */}
      <path d="M344 218.500h24 M373 218.500h24 M370.500 192v24 M370.500 221v24 M368 216h5v5h-5z" stroke="#222" />

      <text x="571" y="332" textAnchor="middle" className="fill-black text-[23px] font-medium">
        ОП−1 (2 шт.)
      </text>

      {/* ramp slab outline */}
      <path
        d="M100 452l1 10h7L332 487h58L615 511.500h74L913 532l1-10h40 M60 453.500h40"
        stroke="#3c3cd0"
      />

      {/* handrails and posts */}
      <g stroke="#000">
        <path
          d="M94 426.500H104L335 451.500H393L620 476.500H688L920 496a4 4 0 0 0 0-8L688 468.500H620L393 444H335L104 419H94a4 4 0 0 0 0 8"
          strokeWidth="5"
        />
        <path d="M100 452L335 477.500H395L620 502H688L916 521.500" strokeWidth="7" />
        <path d="M340 459.500h45 M630 485h45" strokeWidth="5" />
        {POSTS.map(([x, top, bottom]) => (
          <path key={x} d={`M${x}.5 ${top}V${bottom}`} strokeWidth="5" />
        ))}
      </g>

      {/* dimensions */}
      <g stroke="#2f6b2f">
        {POSTS.map(([x, , bottom]) => (
          <path key={x} d={`M${x}.5 ${bottom}V553`} />
        ))}
        <path d="M101 548.500H898" />
        <path d="M86 407.500H104L335 432.500H394L624 458H683L921 478h6" />
        <path d="M95.500 403v14 M104.500 403v14 M335.500 428v14 M394.500 428v14 M624.500 454v12 M683.500 454v12 M915.500 474v12 M921.500 466v60" />
        <path d="M98 407l5-13.500h26 M48 404.500L88 421 M945 464.500H921" />
        <path d="M624 549l7 22.500h27 M683 549l6 22.500h26" />
        <path d="M921 465a27 27 0 0 1 0 54" />
        <path d="M926 487.500h85 M953 495.500h16 M943 523.500h68 M964.500 481v49 M1006.500 480v50" />
        <path d="M989.500 458v27l-19 5 M27 453.500h33" />
        {LEVELS.map((l) => (
          <g key={l.t}>
            <path d={`M${l.x}.5 ${l.y}V${l.base}.5H${l.end}`} />
            <path d={`M${l.x - 7} ${l.y + 8}l7.500 -7l7.500 7`} strokeWidth="3" stroke="#0c4a0c" />
          </g>
        ))}
      </g>
      <g stroke="#0c4a0c" strokeWidth="3">
        {POSTS.map(([x]) => (
          <path key={x} d={`M${x - 5} 553.500l10.500 -10.500`} />
        ))}
        {RAMP_TICKS.map(([x, y]) => (
          <path key={`${x}-${y}`} d={`M${x - 5} ${y + 5}l10 -10`} />
        ))}
        {SIDE_TICKS.map(([x, y]) => (
          <path key={`${x}-${y}`} d={`M${x - 4} ${y - 4}l8 8`} strokeWidth="2" />
        ))}
      </g>
      <g className="fill-[#2d6a2d]">
        {CHAIN.map(([x, t]) => (
          <DimText key={x} x={x} y={546}>
            {t}
          </DimText>
        ))}
        <DimText x={116} y={391}>235</DimText>
        <DimText x={61} y={408} rot={21}>R85</DimText>
        <DimText x={220} y={418} rot={6}>6000</DimText>
        <DimText x={363} y={430}>1525</DimText>
        <DimText x={510} y={444} rot={6}>6000</DimText>
        <DimText x={653} y={456}>1500</DimText>
        <DimText x={799} y={466} rot={5}>6010</DimText>
        <DimText x={933} y={462}>145</DimText>
        <DimText x={644} y={570}>350</DimText>
        <DimText x={702} y={570}>350</DimText>
        <DimText x={944} y={492} rot={-90}>365</DimText>
        <DimText x={987} y={472} rot={-90}>200</DimText>
        <DimText x={963} y={510} rot={-90}>700</DimText>
        <DimText x={1004} y={506} rot={-90}>900</DimText>
        {LEVELS.map((l) => (
          <DimText key={l.t} x={l.tx} y={l.base - 3}>
            {l.t}
          </DimText>
        ))}
      </g>

      {/* callouts */}
      {CALLOUTS.map((c) => (
        <g key={`${c.t}-${c.x}`}>
          <path
            d={`M${c.a} ${c.y + 3}.5H${c.b} ${c.to
              .map(([x, y]) => `M${c.end ? c.b : c.a} ${c.y + 3}.5L${x} ${y}`)
              .join(" ")}`}
            stroke="#4a4ad6"
          />
          <text x={c.x} y={c.y} textAnchor="middle" className="fill-[#3c3cd0]">
            {c.t}
          </text>
        </g>
      ))}
    </svg>
  );
}

const TH = "border-[5px] border-[#0000f0] p-0 font-light leading-[15px]";
const TD = "h-[31px] overflow-hidden whitespace-nowrap border-x-[5px] border-y border-x-[#0000f0] border-y-[#2020a0] p-0";

const LEFT_ROWS = [
  ["ϕ 40 L=1040 мм", "19", "3.99", "75.81"],
  ["ϕ 32 L=6000 мм", "4", "18.18", "72.72"],
  ["ϕ 32 L=6010 мм", "2", "18.21", "36.42"],
];

const RIGHT_ROWS = [
  ["1", "Щебень фракції 20−40", "м³"],
  ["2", "Гранвідсів", "м³"],
  ["3", "Бордюр БР300.30.15", "шт"],
];

function SpecTables() {
  return (
    <div className="text-[15px] font-light italic text-[#1c1c1c] [font-family:'Roboto_Condensed','Liberation_Sans_Narrow','Roboto',sans-serif]">
      <section className="absolute left-[-33px] top-[502px] w-[520px]">
        <h2 className="h-[31px] whitespace-nowrap pl-9 text-[22px] leading-6">
          ція матеріалів для виготовлення ОП−1
        </h2>
        <table className="w-[520px] table-fixed border-collapse">
          <colgroup>
            <col className="w-[88px]" />
            <col className="w-[252px]" />
            <col className="w-[39px]" />
            <col className="w-[58px]" />
            <col />
          </colgroup>
          <thead>
            <tr className="h-[58px]">
              <th className={TH} />
              <th className={TH}>Найменування</th>
              <th className={TH}>Кіл.</th>
              <th className={TH}>Маса,<br />од., кг</th>
              <th className={TH}>Примітки</th>
            </tr>
          </thead>
          <tbody>
            {LEFT_ROWS.map((r) => (
              <tr key={r[0]}>
                <td className={TD} />
                <td className={clsx(TD, "pl-[5px]")}>{r[0]}</td>
                <td className={clsx(TD, "text-center")}>{r[1]}</td>
                <td className={clsx(TD, "text-center")}>{r[2]}</td>
                <td className={clsx(TD, "pl-[7px]")}>{r[3]}</td>
              </tr>
            ))}
          </tbody>
        </table>
      </section>

      <section className="absolute left-[632px] top-[502px] w-[460px]">
        <h2 className="h-[31px] whitespace-nowrap text-[22px] leading-6">
          Зведена відомість матеріалів для влаштування
        </h2>
        <table className="w-[410px] table-fixed border-collapse">
          <colgroup>
            <col className="w-[58px]" />
            <col className="w-[252px]" />
            <col className="w-[39px]" />
            <col />
          </colgroup>
          <thead>
            <tr className="h-[58px]">
              <th className={TH}>№ з/п</th>
              <th className={TH}>Найменування</th>
              <th className={TH}>Од.<br />вим.</th>
              <th className={clsx(TH, "text-left")}>Кільк.</th>
            </tr>
          </thead>
          <tbody>
            {RIGHT_ROWS.map((r) => (
              <tr key={r[0]}>
                <td className={clsx(TD, "text-center")}>{r[0]}</td>
                <td className={clsx(TD, "pl-[6px]")}>{r[1]}</td>
                <td className={clsx(TD, "text-center")}>{r[2]}</td>
                <td className={TD} />
              </tr>
            ))}
          </tbody>
        </table>
      </section>
    </div>
  );
}

function UcsIcon() {
  return (
    <svg viewBox="0 0 60 60" className="absolute bottom-3 left-3 size-[60px] fill-none stroke-[#222]">
      <path d="M5.500 14v42 M5.500 56.500h37.500 M2.500 52.500h7v7h-7z" />
      <path d="M6.500 1l5 5v5 M16.500 1l-5 5 M49 44l11 10 M60 44L49 54" />
    </svg>
  );
}

function ViewCube() {
  return (
    <div className="absolute right-[17px] top-[11px] flex w-[102px] flex-col items-center text-[15px] font-bold text-[#c6c6c6]">
      <span className="absolute left-[3px] top-2 size-24 rounded-full border-[10px] border-[#fafafa]" />
      <span className="relative h-5 leading-5">С</span>
      <div className="relative my-[14px] flex w-full items-center justify-between">
        <span>З</span>
        <button
          type="button"
          className="relative size-[43px] border border-[#b0b0b0] bg-[#ebebeb] text-[12px] font-normal text-[#8c8c8c]"
        >
          <span className="absolute inset-2 bg-[#e0e1e4]" />
          <span className="absolute inset-0 flex items-center justify-center text-[11px]">Сверху</span>
        </button>
        <span>В</span>
      </div>
      <span className="relative h-5 leading-5">Ю</span>
      <button
        type="button"
        className="mt-4 flex h-[13px] w-[37px] items-center justify-center gap-1 rounded-sm bg-[#e8e9f0] text-[9px] font-normal text-[#8e8e9a]"
      >
        МСК
        <svg viewBox="0 0 8 5" className="h-[5px] w-2 fill-none stroke-[#c0c0cc]">
          <path d="M1 .5h6L4 4.500z" />
        </svg>
      </button>
    </div>
  );
}

function NavBar() {
  return (
    <div className="absolute right-[2px] top-[171px] flex h-[176px] w-[28px] flex-col items-center rounded-[5px] border-2 border-[#d2d2d2] bg-[#f6f6f6]">
      <svg viewBox="0 0 24 172" className="h-[172px] w-6 fill-none stroke-[#dcdcdc]">
        <circle cx="20" cy="4" r="2" />
        <circle cx="12" cy="25" r="8" />
        <circle cx="12" cy="25" r="4" />
        <path d="M2 46h20 M2 136h20 M11 41h2 M11 99h2 M11 130h2" />
        <path d="M8 68l-5-7 2-1 3 3-2-8 2-.5 2 6V52h2l1 8 2-7 2 .5-1 7 3-3 1 1-4 9-3 2z" />
        <path d="M3 75l12 14 M15 75L3 89 M3 79v-4h4 M11 75h4v4 M3 85v4h4" />
        <circle cx="17" cy="86" r="4" />
        <path d="M20 89l2 3" />
        <ellipse cx="12" cy="114" rx="8" ry="3" />
        <path d="M12 105v19 M9 108l3-3 3 3 M9 121l3 3 3-3" />
        <path d="M3 140h18v4H3z M4 148h12v10H4z M8 150v6l5-3z" />
        <circle cx="20" cy="167" r="2" />
      </svg>
    </div>
  );
}

const HISTORY = [
  "Укажите угол рамки, введите масштаб (nX или nXП), или",
  "[Все/Центр/Динамика/Граница/Предыдущий/Масштаб/Рамка/Объект] <реальное время>:  о найдено: 260",
  "Выполняется регенерация модели.",
];

function CommandLine() {
  const [cmd, setCmd] = useState("");
  return (
    <div className="absolute bottom-0 left-[199px] w-[595px]">
      <div className="ml-[50px] flex flex-col items-start gap-1 pb-1 text-[9px] leading-3 text-white [font-family:'DejaVu_Sans_Mono','Liberation_Mono',monospace]">
        {HISTORY.map((h) => (
          <p key={h} className="whitespace-pre rounded-[2px] bg-[#6e6e6e]/55 px-px">
            {h}
          </p>
        ))}
      </div>
      <div className="flex h-[21px] border-t border-[#7a7a7a]">
        <div className="flex w-[45px] shrink-0 items-center gap-2 bg-[#5d646f] pl-1 text-[#e6e6e6]">
          <span className="h-4 w-[3px] border-x border-dotted border-[#c9c9c9]" />
          <button type="button" aria-label="Закрыть">
            <Icon name="close" size="sm" />
          </button>
          <button type="button" aria-label="Настройка">
            <Icon name="wrench" size="sm" />
          </button>
        </div>
        <label className="flex flex-1 items-center border-r border-[#7a7a7a] bg-white/70 pl-1">
          <svg viewBox="0 0 14 10" className="h-[10px] w-[14px] fill-[#f5f5f5] stroke-[#777]">
            <path d="M.5 .5h13v9H.5z M.5 2h13 M3 4l2 1.500L3 7 M6 7.500h3" />
          </svg>
          <svg viewBox="0 0 6 4" className="mx-[3px] h-1 w-[6px] fill-[#777]">
            <path d="M0 0h6L3 4z" />
          </svg>
          <input
            value={cmd}
            onChange={(e) => setCmd(e.target.value)}
            aria-label="Командная строка"
            placeholder="Введите команду"
            className="min-w-0 flex-1 text-[9px] italic outline-none placeholder:text-[#8a8a8a] [font-family:'DejaVu_Sans_Mono','Liberation_Mono',monospace]"
          />
          <svg viewBox="0 0 6 4" className="mb-1 mr-[3px] h-1 w-[6px] fill-[#777]">
            <path d="M0 4h6L3 0z" />
          </svg>
        </label>
      </div>
    </div>
  );
}

function Canvas() {
  return (
    <main className="relative min-w-0 flex-1 overflow-hidden bg-white">
      <button type="button" className="absolute left-[3px] top-1 z-10 text-[10px] text-[#222]">
        [−][Сверху][2D-каркас]
      </button>
      <RampDrawing />
      <SpecTables />
      <UcsIcon />
      <ViewCube />
      <NavBar />
      <div className="absolute bottom-[13px] left-[729px] text-[#8a8a8a]/65">
        <p className="text-[15px] leading-5">Активация Windows</p>
        <p className="text-[12px] leading-4">
          Чтобы активировать Windows, перейдите в<br />раздел "Параметры".
        </p>
      </div>
      <CommandLine />
    </main>
  );
}

/* ---------- status bar ---------- */

const LAYOUT_TABS = ["Модель", "Лист1", "Лист2"];

type StatusItem = { icon: string; on?: boolean; menu?: boolean };

const STATUS: StatusItem[] = [
  { icon: "grid" },
  { icon: "snap", menu: true },
  { icon: "ortho" },
  { icon: "polar", on: true, menu: true },
  { icon: "iso", menu: true },
  { icon: "otrack", on: true },
  { icon: "osnap", on: true, menu: true },
  { icon: "lwt", on: true },
  { icon: "annoVis", on: true },
  { icon: "annoAuto" },
  { icon: "anno" },
];

function StatusBar() {
  const [tab, setTab] = useState("Модель");
  return (
    <footer className="flex h-6 shrink-0 bg-[#222933] text-[9px] text-[#d6d6d6]">
      <div className="flex h-[15px] items-center gap-[3px] pl-[11px]">
        {LAYOUT_TABS.map((t) => (
          <button
            key={t}
            type="button"
            onClick={() => setTab(t)}
            className={clsx(
              "h-[15px] rounded-b-md px-2 leading-[15px]",
              t === tab ? "bg-[#3b4453] font-bold text-white" : "bg-[#2c3441] text-[#b4b8be]",
            )}
          >
            {t}
          </button>
        ))}
        <button
          type="button"
          aria-label="Новый лист"
          className="flex h-3 w-5 items-center justify-center rounded-md bg-[#2c3441] text-[#b4b8be]"
        >
          <Icon name="plus" size="sm" />
        </button>
      </div>

      <div className="ml-auto flex h-[22px] items-center gap-[2px] pr-[2px]">
        <button type="button" className="mr-[2px] h-5 bg-[#323b49] px-[3px] font-semibold">
          МОДЕЛЬ
        </button>
        {STATUS.map((s) => (
          <span key={s.icon} className="flex items-center bg-[#323b49]">
            <button
              type="button"
              aria-label={s.icon}
              aria-pressed={!!s.on}
              className={clsx(
                "flex h-5 w-[18px] items-center justify-center",
                s.on && "bg-[#4f86b8]",
              )}
            >
              <Icon name={s.icon} />
            </button>
            {s.menu && <Caret />}
          </span>
        ))}
        <button type="button" className="ml-1 flex h-5 items-center bg-[#323b49] font-semibold">
          1:100
          <Caret className="w-[9px]" />
        </button>
        <span className="flex items-center bg-[#323b49]">
          <IconButton name="gear" className="h-5 w-[19px]" />
          <Caret className="w-3" />
        </span>
        {["plus", "isolate", "perf", "clean", "menu"].map((n) => (
          <IconButton key={n} name={n} className="h-5 w-[19px] bg-[#323b49]" />
        ))}
      </div>
    </footer>
  );
}

export default function App() {
  return (
    <div className="flex h-screen flex-col overflow-hidden bg-[#3b4453] [font-family:'Noto_Sans','Open_Sans',sans-serif]">
      <TitleBar />
      <FileTabs />
      <Toolbars />
      <div className="flex min-h-0 flex-1 gap-[3px] pr-[3px]">
        <SideToolbar tools={DRAW_TOOLS} label="Рисование" />
        <Canvas />
        <SideToolbar tools={MODIFY_TOOLS} label="Редактирование" />
      </div>
      <StatusBar />
    </div>
  );
}
